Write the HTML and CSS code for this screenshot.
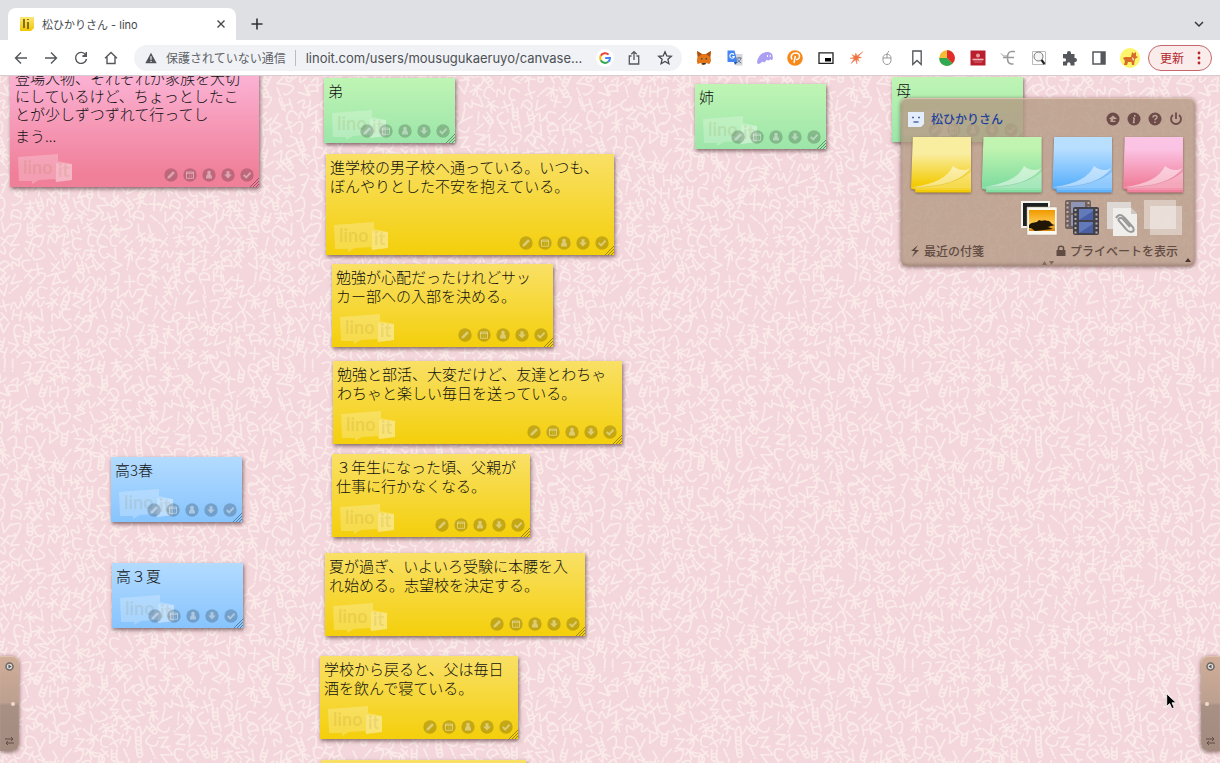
FILE: index.html
```html
<!DOCTYPE html>
<html lang="ja">
<head>
<meta charset="utf-8">
<title>松ひかりさん - lino</title>
<link rel="stylesheet" href="styles.css">
</head>
<body>
<svg class="sprite" aria-hidden="true">
  <symbol id="edit" viewBox="0 0 14 14"><circle class="disc" cx="7" cy="7" r="6.7"/><path class="glyph solid" d="M3.300 10.800l.7-2.600L9 3.200l1.900 1.900L6 10z"/></symbol>
  <symbol id="calendar" viewBox="0 0 14 14"><circle class="disc" cx="7" cy="7" r="6.7"/><path class="glyph" d="M3.500 4h7v6.300h-7zM3.500 5.300h7M6 7h.6M8 7h.6M6 8.800h.6M8 8.800h.6"/></symbol>
  <symbol id="person" viewBox="0 0 14 14"><circle class="disc" cx="7" cy="7" r="6.700"/><path class="glyph solid" d="M7 2.800a1.900 1.900 0 0 1 1.200 3.300C9.700 7 10 8.500 10 10.500H4c0-2 .3-3.500 1.800-4.400A1.900 1.900 0 0 1 7 2.800z"/></symbol>
  <symbol id="down" viewBox="0 0 14 14"><circle class="disc" cx="7" cy="7" r="6.700"/><path class="glyph solid" d="M5.500 3.200h3v3.300h2.300L7 10.500 3.200 6.500h2.300z"/></symbol>
  <symbol id="check" viewBox="0 0 14 14"><circle class="disc" cx="7" cy="7" r="6.700"/><path class="glyph thick" d="M3.800 7l2.400 2.400 4.400-4.800"/></symbol>
  <symbol id="peel" viewBox="0 0 60 56">
    <path d="M0 50C26 50 47 46 60 35v16H5z" fill="#fff" opacity=".3"/>
    <path d="M5 52h55" stroke="#fff" opacity=".35"/>
    <path d="M2 50C24 47 37 40 42 29c6 5 12 5 18 2C50 44 32 50 2 50z" fill="#fff" opacity=".5"/>
    <path d="M2 50C32 50 50 44 60 31" fill="none" stroke="#000" opacity=".06"/>
  </symbol>
</svg>

<header class="browser">
  <div class="tabs">
    <div class="tab">
      <svg class="favicon" viewBox="0 0 14 14"><defs><linearGradient id="fav" x1="0" y1="0" x2="0" y2="1"><stop stop-color="#fae77b"/><stop offset="1" stop-color="#f2c500"/></linearGradient></defs><path d="M0 0h14v11l-3 3H0z" fill="url(#fav)"/><path d="M4 2v9M8 5v7M8 2v1" stroke="#6b5500" stroke-width="1.6"/></svg>
      <span class="tab-title">松ひかりさん - lino</span>
      <button class="plain" aria-label="タブを閉じる"><svg viewBox="0 0 12 12" width="12" height="12"><path d="M2.5 2.5l7 7m0-7l-7 7" stroke="#44474b" stroke-width="1.4"/></svg></button>
    </div>
    <button class="plain new-tab" aria-label="新しいタブ"><svg viewBox="0 0 14 14" width="14" height="14"><path d="M7 1.5v11M1.5 7h11" stroke="#303236" stroke-width="1.6"/></svg></button>
    <button class="plain tab-list" aria-label="タブ一覧"><svg viewBox="0 0 12 12" width="12" height="12"><path d="M2 4l4 4 4-4" fill="none" stroke="#36383c" stroke-width="1.5"/></svg></button>
  </div>
  <div class="toolbar">
    <nav class="nav">
      <button class="plain" aria-label="戻る"><svg viewBox="0 0 16 16"><path d="M14 8H2.5M8 2.5L2.5 8 8 13.5"/></svg></button>
      <button class="plain" aria-label="進む"><svg viewBox="0 0 16 16"><path d="M2 8h11.500M8 2.500L13.500 8 8 13.500"/></svg></button>
      <button class="plain" aria-label="再読み込み"><svg viewBox="0 0 16 16"><path d="M12.800 5A5.500 5.500 0 1 0 13.500 9M13.300 2v3.700H9.600"/><path d="M14 2v5H9z" fill="#54575b" stroke="none"/></svg></button>
      <button class="plain" aria-label="ホーム"><svg viewBox="0 0 16 16"><path d="M2 8.200L8 2.500l6 5.700M4 7v6.500h8V7"/></svg></button>
    </nav>
    <div class="address">
      <svg width="12" height="12" viewBox="0 0 12 12"><path d="M6 .8L11.700 11.200H.3z" fill="#505357"/><path d="M6 4.300v3.500M6 8.700V10" stroke="#f0f2f5" stroke-width="1.200"/></svg>
      <span class="insecure">保護されていない通信</span>
      <label class="hidden" for="url">アドレス</label>
      <input id="url" class="url" value="linoit.com/users/mousugukaeruyo/canvase...">
      <svg class="google" width="18" height="18" viewBox="0 0 18 18" fill="none" stroke-width="2"><circle cx="9" cy="9" r="9" fill="#fff"/><path d="M12.600 5.600A5 5 0 0 0 4.700 6.700" stroke="#ea4335"/><path d="M4.700 6.700a5 5 0 0 0 0 4.600" stroke="#fbbc05"/><path d="M4.700 11.300a5 5 0 0 0 7.500 1.500" stroke="#34a853"/><path d="M12.200 12.800A5 5 0 0 0 14 9H9.200" stroke="#4285f4"/></svg>
      <button class="plain" aria-label="共有"><svg width="16" height="16" viewBox="0 0 16 16" fill="none" stroke="#54575b" stroke-width="1.300"><path d="M5.500 6H3.300v8h9.400V6h-2.200M8 10V1.800M5.300 4.300L8 1.600l2.700 2.700"/></svg></button>
      <button class="plain" aria-label="ブックマーク"><svg width="16" height="16" viewBox="0 0 16 16"><path d="M8 1.800l1.800 4.100 4.500.4-3.400 3 1 4.400L8 11.400l-3.900 2.300 1-4.400-3.400-3 4.500-.4z" fill="none" stroke="#44474b" stroke-width="1.300"/></svg></button>
    </div>
    <div class="extensions">
      <button class="plain" aria-label="MetaMask"><svg viewBox="0 0 16 16"><path d="M1 1l5 3h4l5-3-.5 6 .5 4-1.500 3-4-1-1.500 2h-2L5 13l-3.500 1L.800 11 1.500 7z" fill="#e2761b"/><path d="M1 1l5 3-4 3zM15 1l-5 3 4 3z" fill="#a84f16"/><path d="M5 8l2 1-2 .6zM11 8L9 9l2 .600zM6 13h4l-.7 1.500H6.700z" fill="#233447"/></svg></button>
      <button class="plain" aria-label="翻訳"><svg viewBox="0 0 16 16"><path d="M6 4h9.500v11.500H9z" fill="#d4d7dc"/><path d="M.5.500h7l3 11.500H.500z" fill="#4385f3"/><path d="M7 12h3.500L8 15z" fill="#2452b3"/><path d="M7 4.600A2.300 2.300 0 1 0 7.300 6.500H5.300" fill="none" stroke="#fff" stroke-width="1.100"/><path d="M9.500 8h5M12 7v1m2 0c-.5 2-2 3.500-3.500 4.500M10.500 9c1 2 2 3 3.700 4" fill="none" stroke="#637487"/></svg></button>
      <button class="plain" aria-label="Phantom"><svg viewBox="0 0 16 16"><path d="M0 12.500C1 6 5 2 10.500 2c4 0 5.800 3 5.300 6.500-.3 2-2 2-2.600.500-.7 1.600-2.300 2-3.400.800C8 12.500 6 13 5.300 11.500 3 14.500.300 14.500 0 12.500z" fill="#ab9ff2"/><path d="M10.500 5v2M13.200 5v2" stroke="#fff"/></svg></button>
      <button class="plain" aria-label="P"><svg viewBox="0 0 16 16"><circle cx="8" cy="8" r="7.800" fill="#f7891b"/><path d="M7 13l1.300-7M5 9.500C2.500 5 6.500 3 8.500 3c6 0 4.500 7 .500 6.500" fill="none" stroke="#fff" stroke-width="1.500"/></svg></button>
      <button class="plain" aria-label="ピクチャーインピクチャー"><svg viewBox="0 0 16 16"><path d="M1 2.800h14v10.500H1z" fill="none" stroke="#222" stroke-width="1.300"/><path d="M7 8h6v3.500H7z"/></svg></button>
      <button class="plain" aria-label="スター"><svg viewBox="0 0 16 16"><path d="M15 1.500l-4.800 5 3.300 1-3.800.9 1.600 2.900-2.600-1.900L9 14l-1.600-4.200L3 13.500l3.200-4.700L2 8.300l4-.9L4 4.500l3 1.700L7.800 3l1.200 3z" fill="#ee713e" stroke="#ee713e" stroke-width=".4"/></svg></button>
      <button class="plain" aria-label="マウス"><svg viewBox="0 0 16 16" fill="none" stroke="#999"><path d="M4 8h8v2c0 6-8 6-8 0V8c0-5 8-5 8 0M8 4v4M8 4c0-2 2-1 1.500-3"/></svg></button>
      <button class="plain" aria-label="しおり"><svg viewBox="0 0 16 16" fill="none" stroke="#505357" stroke-width="1.300"><path d="M3.800 1h8.400v13.500L8 10.500l-4.200 4z"/></svg></button>
      <button class="plain" aria-label="円グラフ"><svg viewBox="0 0 16 16"><circle cx="8" cy="8" r="7.700" fill="#f5bd37"/><path d="M8 8V.300A7.700 7.700 0 0 1 13.500 13.500z" fill="#e22b2b"/><path d="M8 8l5.500 5.500A7.700 7.700 0 0 1 .300 8z" fill="#31a852"/></svg></button>
      <button class="plain" aria-label="辞書"><svg viewBox="0 0 16 16"><path d="M.500.500h15v15H.500z" fill="#bb1f2e"/><circle cx="8" cy="5.500" r="2" fill="#e79aa0"/><path d="M2.500 9.500h11" stroke="#eeb7bb" stroke-width="1.600"/><path d="M4 12h8" stroke="#d3727b"/></svg></button>
      <button class="plain" aria-label="Є"><svg viewBox="0 0 16 16" fill="none" stroke="#999" stroke-width="1.600"><path d="M15 1.500h-3C8 1.500 7.500 4 7.500 8s1 6 4 6h2M3 7.500h11" /><path d="M1 3.500l2.500 2.500h4" stroke-width="1"/></svg></button>
      <button class="plain" aria-label="検索"><svg viewBox="0 0 16 16" fill="none"><path d="M1.500 1.500h13v13h-13z" stroke="#bbb"/><circle cx="7.500" cy="6.500" r="4.500" fill="#f5f5f5" stroke="#777"/><path d="M10.500 10l3 4" stroke="#222" stroke-width="2.200"/></svg></button>
      <button class="plain" aria-label="拡張機能"><svg viewBox="0 0 16 16"><path d="M2 4h4V3a2 2 0 0 1 4 0v1h3.500v4h.5a2 2 0 0 1 0 4h-.5v3.500h-4V14a1.700 1.700 0 0 0-3.400 0v1.500H2v-4h1.500a1.600 1.600 0 0 0 0-3.200H2z" fill="#54575b"/></svg></button>
      <button class="plain" aria-label="サイドパネル"><svg viewBox="0 0 16 16"><path d="M2 2h12v12H2z" fill="none" stroke="#54575b" stroke-width="1.500"/><path d="M9.500 2H14v12H9.500z" fill="#54575b"/></svg></button>
      <button class="plain avatar" aria-label="プロフィール"><svg viewBox="0 0 20 20"><circle cx="10" cy="10" r="10" fill="#fcf46a"/><path d="M3 10l2-1 6 0 1-5 1.500 1.500L16 4v4l2 1-3 2-1 6h-2l-.5-3H8l-1 3H4l1-4z" fill="#d76b28"/><path d="M12 9l2 2-1 2z" fill="#fff"/></svg></button>
    </div>
    <button class="update">更新<svg width="4" height="16" viewBox="0 0 4 16" fill="#b3262a"><circle cx="2" cy="3" r="1.400"/><circle cx="2" cy="8" r="1.400"/><circle cx="2" cy="13" r="1.400"/></svg></button>
  </div>
</header>

<main class="board" id="board">
  <svg class="wallpaper" aria-hidden="true"><defs><pattern id="scribble" width="300" height="300" patternUnits="userSpaceOnUse"></pattern></defs><rect width="100%" height="100%" fill="url(#scribble)"/></svg>

  <section class="panel" aria-label="メニュー">
    <div class="panel-head">
      <svg width="16" height="15" viewBox="0 0 16 15"><path d="M0 0h16v12l-3 3H0z" fill="#e3edfb"/><path d="M4 5.500h2M10 5.500h2M5.500 10h5" stroke="#5167a5" stroke-width="1.500"/></svg>
      <a class="user" href="#">松ひかりさん</a>
      <button class="plain" aria-label="戻る"><svg viewBox="0 0 14 14"><circle cx="7" cy="7" r="6.500" fill="#6d4b49"/><path d="M2.800 7L7 3.500 11.200 7H9.500v3h-5V7z" fill="#c0a596"/><path d="M7 8h4" stroke="#6d4b49" stroke-width="1.500"/></svg></button>
      <button class="plain" aria-label="情報"><svg viewBox="0 0 14 14"><circle cx="7" cy="7" r="6.500" fill="#6d4b49"/><path d="M7.800 3v1.700M7.400 5.800L6.500 10.500h1.300M6 6h1.400" fill="none" stroke="#c0a596" stroke-width="1.500"/></svg></button>
      <button class="plain" aria-label="ヘルプ"><svg viewBox="0 0 14 14"><circle cx="7" cy="7" r="6.500" fill="#6d4b49"/><path d="M5 5.500C5 3 9 3 9 5.200 9 6.700 7 6.600 7 8.300M7 9.500V11" fill="none" stroke="#c0a596" stroke-width="1.500"/></svg></button>
      <button class="plain" aria-label="ログアウト"><svg viewBox="0 0 14 14" fill="none" stroke="#6d4b49" stroke-width="1.800"><path d="M4 3a5 5 0 1 0 6 0M7 .5v6.500"/></svg></button>
    </div>
    <div class="swatches">
      <button class="plain swatch yellow-ink" aria-label="黄色の付箋"><svg><use href="#peel"/></svg></button>
      <button class="plain swatch green-ink" aria-label="緑の付箋"><svg><use href="#peel"/></svg></button>
      <button class="plain swatch blue-ink" aria-label="青の付箋"><svg><use href="#peel"/></svg></button>
      <button class="plain swatch pink-ink" aria-label="ピンクの付箋"><svg><use href="#peel"/></svg></button>
    </div>
    <div class="media">
      <button class="plain" aria-label="写真"><svg width="38" height="36" viewBox="0 0 38 36"><defs><linearGradient id="sun" x1="0" y1="0" x2="0" y2="1"><stop stop-color="#ef9900"/><stop offset=".6" stop-color="#ffc64c"/><stop offset="1" stop-color="#d88510"/></linearGradient></defs><path d="M1 1h29v27H1z" fill="#f4f3ef"/><path d="M3 3h25v23H3z" fill="#1d2021"/><path d="M7 7h30v28H7z" fill="#f9f7ee" stroke="#b29b89" stroke-width=".5"/><path d="M9 10h26v21H9z" fill="url(#sun)"/><path d="M9 25c4-4 7-1 10-5 3 2 6-1 8 1 4-1 3 4 8 4l-7 2 5 2-18 2-4-3H9z" fill="#201603"/></svg></button>
      <button class="plain" aria-label="動画"><svg width="36" height="37" viewBox="0 0 36 37"><g opacity=".75"><rect x="1" y="1" width="26" height="29" rx="2" fill="#554b4c"/><path d="M7 3h14v11H7zM7 16h14v11H7z" fill="#8090c0"/><path d="M3.500 3v26M24.500 3v26" stroke="#c6b6aa" stroke-width="2" stroke-dasharray="2 2.500"/></g><g transform="translate(8 7)"><rect x="1" y="1" width="26" height="28" rx="2" fill="#43424a"/><path d="M7 3h14v11H7zM7 16h14v11H7z" fill="#6279ba"/><path d="M7 14L21 5v9zM7 27l14-9v9z" fill="#4a5fa3"/><path d="M3.500 3v25M24.500 3v25" stroke="#b9aaa3" stroke-width="2" stroke-dasharray="2 2.500"/></g></svg></button>
      <button class="plain" aria-label="ファイル"><svg width="32" height="36" viewBox="0 0 32 36"><path d="M1 2h24v27H1z" fill="#ded8d4"/><path d="M7 8h18l6 6v22H7z" fill="#f0eeea"/><path d="M25 8v6h6" fill="#ccc8c3"/><path d="M10 18c4-7 8-1 15 7 7 7-1 9-5 4L13 21c-2-3 2-4 4-2l7 8" fill="none" stroke="#999" stroke-width="2"/></svg></button>
      <button class="plain" aria-label="透明付箋"><svg width="38" height="36" viewBox="0 0 38 36"><path d="M0 0h32v29H0zM6 6h32v29H6z" fill="#fff" opacity=".4"/><path d="M6 6h26v23H6z" fill="#fff" opacity=".4"/></svg></button>
    </div>
    <div class="panel-foot">
      <button class="plain"><svg width="10" height="12" viewBox="0 0 10 12"><path d="M8 0L1 6h4l-3 6 7-7H5z" fill="#614c43"/></svg>最近の付箋</button>
      <button class="plain"><svg width="10" height="12" viewBox="0 0 10 12"><path d="M.500 5h9v6h-9z" fill="#614c43"/><path d="M2.500 5V3C2.500.500 7.500.500 7.500 3v2" fill="none" stroke="#614c43" stroke-width="1.500"/></svg>プライベートを表示</button>
    </div>
    <svg class="panel-grip" width="12" height="4" viewBox="0 0 12 4"><path d="M0 4l2.500-4L5 4zM7 0h5L9.500 4z" fill="#816c62"/></svg>
    <svg class="panel-corner" width="6" height="4" viewBox="0 0 6 4"><path d="M0 4l3-4 3 4z" fill="#49352e"/></svg>
  </section>

  <aside class="drawer drawer-left">
    <button class="plain" aria-label="開く"><svg width="9" height="9" viewBox="0 0 9 9"><circle cx="4.500" cy="4.500" r="3.500" fill="#ddd" stroke="#6f6763" stroke-width="1.500"/><path d="M3.500 2.500l3 2-3 2z" fill="#555"/></svg></button>
    <i class="knob"></i>
    <svg width="9" height="8" viewBox="0 0 9 8" fill="none" stroke="#5e4d44"><path d="M0 2h8M6 0l2 2-2 2M9 6H1M3 4L1 6l2 2"/></svg>
  </aside>
  <aside class="drawer drawer-right">
    <button class="plain" aria-label="開く"><svg width="9" height="9" viewBox="0 0 9 9"><circle cx="4.500" cy="4.500" r="3.500" fill="#ddd" stroke="#6f6763" stroke-width="1.500"/><path d="M5.500 2.500l-3 2 3 2z" fill="#555"/></svg></button>
    <i class="knob"></i>
    <svg width="9" height="8" viewBox="0 0 9 8" fill="none" stroke="#5e4d44"><path d="M0 2h8M6 0l2 2-2 2M9 6H1M3 4L1 6l2 2"/></svg>
  </aside>
  <svg class="cursor" width="11" height="17" viewBox="0 0 11 17"><path d="M.700.800v12.500l3-2.700 2.200 5 2.300-1-2.200-4.800h4.200z" fill="#000" stroke="#fff" stroke-width=".800"/></svg>
</main>
<script src="board.js"></script>
</body>
</html>
```

FILE: styles.css
```css
* { box-sizing: border-box; }
html, body { height: 100%; margin: 0; }
body {
  display: flex;
  flex-direction: column;
  overflow: hidden;
  color: #111;
  font-family: "Inter", "Noto Sans CJK JP", sans-serif;
}
.sprite { position: absolute; width: 0; height: 0; }
.hidden { position: absolute; width: 1px; height: 1px; overflow: hidden; clip-path: inset(50%); }
.plain {
  display: flex;
  align-items: center;
  justify-content: center;
  padding: 0;
  border: 0;
  background: none;
  color: inherit;
  font: inherit;
}

/* Browser frame */
.tabs { display: flex; align-items: center; height: 40px; padding: 0 15px 0 8px; background: #dee0e4; }
.tab {
  display: flex;
  align-items: center;
  align-self: flex-end;
  gap: 8px;
  width: 228px;
  height: 32px;
  padding: 0 9px 0 12px;
  border-radius: 8px 8px 0 0;
  background: #fff;
}
.favicon { width: 14px; height: 14px; }
.tab-title { flex: 1; color: #45484c; font-size: 11px; }
.new-tab { margin: 8px 0 0 14px; }
.tab-list { margin: 8px 0 0 auto; }
.toolbar { display: flex; align-items: center; height: 35px; padding: 0 8px 0 6px; background: #fff; }
.nav { display: flex; margin-right: 8px; }
.nav button { width: 30px; height: 26px; }
.nav svg { width: 16px; height: 16px; fill: none; stroke: #54575b; stroke-width: 1.4; }
.address {
  display: flex;
  align-items: center;
  flex: 1;
  gap: 9px;
  min-width: 0;
  height: 26px;
  padding: 0 6px 0 11px;
  border-radius: 13px;
  background: #f0f2f5;
}
.insecure { color: #606368; font-size: 12px; white-space: nowrap; }
.url {
  flex: 1;
  min-width: 0;
  height: 16px;
  padding: 0 0 0 10px;
  border: 0;
  border-left: 1px solid #b9bcc1;
  background: none;
  color: #4d5054;
  font: 13px "Inter", sans-serif;
}
.address .plain { width: 22px; }
.extensions { display: grid; grid-template-columns: repeat(15, 1fr); width: 456px; margin: 0 3px 0 7px; align-items: center; }
.extensions svg { width: 16px; height: 16px; }
.extensions .avatar svg { width: 20px; height: 20px; }
.update {
  display: flex;
  align-items: center;
  justify-content: space-between;
  width: 64px;
  height: 26px;
  padding: 0 10px 0 11px;
  border: 1px solid #c4686b;
  border-radius: 13px;
  background: #fbecec;
  color: #b3262a;
  font: 12px "Noto Sans CJK JP", sans-serif;
}

/* Canvas */
.board { position: relative; flex: 1; overflow: hidden; border-top: 1px solid #d9ccd0; background: #f4d7dc; }
.wallpaper { position: absolute; width: 100%; height: 100%; }
.wallpaper path { fill: none; stroke: #faebe9; stroke-width: 2; stroke-linecap: round; stroke-linejoin: round; }

.note { position: absolute; box-shadow: 1px 2px 4px rgba(70, 40, 45, .65); }
.note p {
  position: relative;
  margin: 0;
  padding: 3px 4px;
  font: 300 15px/19px "Noto Sans CJK JP", sans-serif;
  white-space: pre;
}
.note .tight { padding: 26px 5px 0; line-height: 18px; }
.note .tight + p { padding: 2px 5px; line-height: 22px; }
.yellow { background: linear-gradient(#f9e066, #f4cf0b); }
.green { background: linear-gradient(#bff5b4, #9ce5a9); }
.blue { background: linear-gradient(#b3dbff, #87c4fd); }
.pink { background: linear-gradient(#fbb0d2 25%, #f0809a 90%); }
.brand { position: absolute; left: 8px; bottom: 3px; width: 56px; height: 30px; }
.brand path { fill: #fff; opacity: .24; }
.brand text { font: 700 18px "Lato", sans-serif; fill: #806000; opacity: .1; }
.actions { position: absolute; right: 5px; bottom: 5px; display: flex; gap: 5px; }
.actions svg { width: 14px; height: 14px; }
.disc { fill: #000; opacity: .2; }
.glyph { fill: none; stroke: #fff; stroke-width: 1; opacity: .42; }
.solid { fill: #fff; stroke: none; }
.thick { stroke-width: 2; }
.resize { position: absolute; right: 0; bottom: 0; width: 9px; height: 9px; stroke: #000; opacity: .35; }

/* Menu panel */
.panel {
  position: absolute;
  top: 22px;
  right: 25px;
  width: 294px;
  padding: 10px 12px 4px 10px;
  border-radius: 6px;
  background: rgba(180, 152, 131, .8);
  box-shadow: 0 1px 4px rgba(80, 50, 45, .7), inset 0 1px 1px #e2c4b3, inset 0 -2px 3px rgba(100, 70, 60, .3);
}
.panel-head { display: flex; align-items: center; gap: 7px; height: 22px; margin-left: -3px; }
.panel-head button svg { width: 14px; height: 14px; }
.user { flex: 1; color: #20409b; font: 500 12px/20px "Noto Sans CJK JP", sans-serif; text-decoration: none; }
.swatches { display: flex; justify-content: space-between; margin-top: 7px; }
.swatch { filter: drop-shadow(0 1px 1px rgba(80, 50, 40, .6)); }
.swatch svg { width: 60px; height: 56px; clip-path: polygon(3% 0, 100% 0, 100% 99%, 7% 99%, 7% 94%, 0 92%); }
.yellow-ink svg { background: linear-gradient(#f9eda0 30%, #f3cb05 85%); }
.green-ink svg { background: linear-gradient(#c0f4b0 20%, #82dda0 85%); }
.blue-ink svg { background: linear-gradient(#b9dfff 20%, #5eb2fc 85%); }
.pink-ink svg { background: linear-gradient(#fcc4e4 20%, #f0809c 85%); }
.media { display: flex; justify-content: flex-end; gap: 6px; margin: 6px 1px 0 0; }
.panel-foot { display: flex; justify-content: space-between; margin-top: 4px; padding: 0 5px 0 0; color: #614c43; font: 500 12px/22px "Noto Sans CJK JP", sans-serif; }
.panel-foot button { gap: 4px; margin-left: -1px; }
.panel-grip { position: absolute; bottom: 1px; left: 141px; }
.panel-corner { position: absolute; right: 4px; bottom: 4px; }

/* Side drawers */
.drawer {
  position: absolute;
  bottom: 12px;
  display: flex;
  flex-direction: column;
  align-items: center;
  justify-content: space-between;
  width: 19px;
  height: 95px;
  padding: 6px 4px;
  background: linear-gradient(#d0ad98, #bda08f 49%, #a99085 52%, #a48b80);
  box-shadow: 0 1px 4px rgba(80, 50, 45, .7), inset 0 1px 1px #e2c4b3;
}
.drawer-left { left: 0; border-radius: 0 7px 7px 0; }
.drawer-right { right: 0; border-radius: 7px 0 0 7px; }
.knob { width: 4px; height: 4px; border-radius: 50%; background: #f2d9c9; }
.drawer-left .knob { align-self: flex-end; }
.drawer-right .knob { align-self: flex-start; }
.cursor { position: absolute; right: 43px; bottom: 53px; }
```

FILE: board.js
```js
const SVG = 'http://www.w3.org/2000/svg';

const notes = [
  { color: 'pink', x: 10, y: -33, w: 249, h: 144, body: '<p class="tight">登場人物、それぞれが家族を大切\nにしているけど、ちょっとしたこ\nとが少しずつずれて行ってし</p><p>まう...</p>' },
  { color: 'green', x: 324, y: 2, w: 131, h: 65, text: '弟' },
  { color: 'green', x: 695, y: 8, w: 131, h: 65, text: '姉' },
  { color: 'green', x: 892, y: 1, w: 131, h: 65, text: '母' },
  { color: 'yellow', x: 326, y: 78, w: 288, h: 101, text: '進学校の男子校へ通っている。いつも、\nぼんやりとした不安を抱えている。' },
  { color: 'yellow', x: 332, y: 188, w: 221, h: 83, text: '勉強が心配だったけれどサッ\nカー部への入部を決める。' },
  { color: 'yellow', x: 333, y: 285, w: 289, h: 83, text: '勉強と部活、大変だけど、友達とわちゃ\nわちゃと楽しい毎日を送っている。' },
  { color: 'yellow', x: 332, y: 378, w: 198, h: 83, text: '３年生になった頃、父親が\n仕事に行かなくなる。' },
  { color: 'yellow', x: 325, y: 477, w: 260, h: 83, text: '夏が過ぎ、いよいろ受験に本腰を入\nれ始める。志望校を決定する。' },
  { color: 'yellow', x: 320, y: 580, w: 198, h: 83, text: '学校から戻ると、父は毎日\n酒を飲んで寝ている。' },
  { color: 'yellow', x: 321, y: 684, w: 205, h: 83, text: '' },
  { color: 'blue', x: 111, y: 381, w: 131, h: 65, text: '高3春' },
  { color: 'blue', x: 112, y: 487, w: 131, h: 65, text: '高３夏' }
];
const actions = [['edit', '編集'], ['calendar', '期限'], ['person', '公開'], ['down', '移動'], ['check', '完了']];

const panel = document.querySelector('.panel');
for (const n of notes) {
  const el = document.createElement('article');
  el.className = `note ${n.color}`;
  el.style.cssText = `left:${n.x}px;top:${n.y}px;width:${n.w}px;height:${n.h}px`;
  el.innerHTML = `
    <svg class="brand" viewBox="0 0 56 30"><path d="M0 3l40-3v7l14 3v16l-16 2-1-3-16 1-7 4v-3H1z"/><path d="M38 9l16 1v16l-16 2z"/><text x="5" y="20">lino</text><text x="40" y="23">it</text></svg>
    ${n.body || `<p>${n.text}</p>`}
    <div class="actions">${actions.map(([id, label]) => `<button class="plain" aria-label="${label}"><svg><use href="#${id}"/></svg></button>`).join('')}</div>
    <svg class="resize" viewBox="0 0 9 9"><path d="M0 9l9-9M3 9l6-6M6 9l3-3"/></svg>`;
  panel.before(el);
}

/* Wallpaper: small handwriting-like strokes scattered over a repeating tile. */
const strokes = [
  'M-6-5L-1 6L5-6', 'M-6-3H6M0-7V7M-5 6L0-2L5 6', 'M-3-7V5Q0 9 3 5V-7M-3-2H3M-3 2H3',
  'M-6-5Q7-9 3 0T-4 6', 'M-6 0H6M0-7V7', 'M4-6Q-8-8-5 1T5 5', 'M-6-5H5L-4 6H6',
  'M-5-6V6M-5 0H4M4-6V6', 'M-6-4H6M-4 1H4M1-7Q2 4-5 7M1 1L6 7', 'M-5 5Q-8-7 0-6T5 4M-4 1L5 3',
  'M0-7V3M0 6V7', 'M-6 4Q-3-9 0 0T6-4'
];
let seed = 41;
const rand = () => (seed = (seed * 16807) % 2147483647) / 2147483647;
const tile = document.getElementById('scribble');
const count = 24;
for (let row = 0; row < count; row++) {
  for (let col = 0; col < count; col++) {
    const x = col * 300 / count + rand() * 6;
    const y = row * 300 / count + rand() * 6;
    const d = strokes[Math.floor(rand() * strokes.length)];
    const turn = rand() * 100 - 50;
    for (const dx of x < 12 ? [0, 300] : x > 288 ? [0, -300] : [0]) {
      for (const dy of y < 12 ? [0, 300] : y > 288 ? [0, -300] : [0]) {
        const p = document.createElementNS(SVG, 'path');
        p.setAttribute('d', d);
        p.setAttribute('transform', `translate(${x + dx} ${y + dy}) rotate(${turn}) scale(.85)`);
        tile.append(p);
      }
    }
  }
}
```
